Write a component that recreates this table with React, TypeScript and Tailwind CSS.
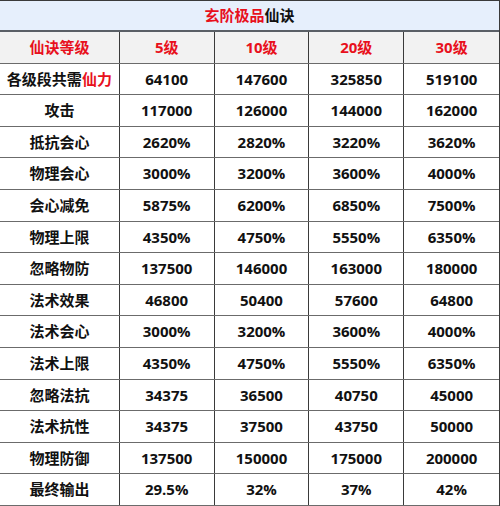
import React from "react";

const rows: [React.ReactNode, string, string, string, string][] = [
  [<><span>各级段共需</span><span className="text-[#e8101c]">仙力</span></>, "64100", "147600", "325850", "519100"],
  ["攻击", "117000", "126000", "144000", "162000"],
  ["抵抗会心", "2620%", "2820%", "3220%", "3620%"],
  ["物理会心", "3000%", "3200%", "3600%", "4000%"],
  ["会心减免", "5875%", "6200%", "6850%", "7500%"],
  ["物理上限", "4350%", "4750%", "5550%", "6350%"],
  ["忽略物防", "137500", "146000", "163000", "180000"],
  ["法术效果", "46800", "50400", "57600", "64800"],
  ["法术会心", "3000%", "3200%", "3600%", "4000%"],
  ["法术上限", "4350%", "4750%", "5550%", "6350%"],
  ["忽略法抗", "34375", "36500", "40750", "45000"],
  ["法术抗性", "34375", "37500", "43750", "50000"],
  ["物理防御", "137500", "150000", "175000", "200000"],
  ["最终输出", "29.5%", "32%", "37%", "42%"],
];

const font = { fontFamily: '"Open Sans", "Noto Sans CJK SC", sans-serif' };

function Row({ cells, cls }: { cells: React.ReactNode[]; cls: string }) {
  return (
    <div className={`flex flex-1 border-b border-[#6b6b6b] ${cls}`}>
      {cells.map((c, i) => (
        <div
          key={i}
          className={`flex items-center justify-center ${i === 0 ? "w-[120px]" : "w-[95px]"} ${i < 4 ? "border-r border-[#3a3a3a]" : ""}`}
        >
          {c}
        </div>
      ))}
    </div>
  );
}

export default function App() {
  return (
    <div className="w-[500px] h-[506px] bg-white flex flex-col border-t border-r border-[#3a3a3a] text-[15px] font-bold text-[#111]" style={font}>
      <div className="h-[31px] shrink-0 flex items-center justify-center bg-[#e6effc] border-b-2 border-[#5a5f66]">
        <span className="text-[#e8101c]">玄阶极品</span>
        <span>仙诀</span>
      </div>
      <Row cls="bg-[#f2f2f2] text-[#e8101c]" cells={["仙诀等级", "5级", "10级", "20级", "30级"]} />
      {rows.map((r, i) => (
        <Row key={i} cls="bg-white" cells={r} />
      ))}
    </div>
  );
}
